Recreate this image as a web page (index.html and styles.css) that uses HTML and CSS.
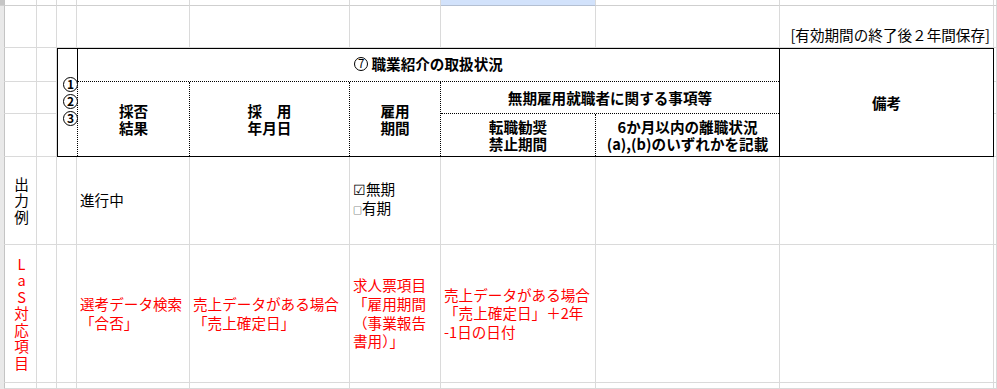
FILE: index.html
```html
<!DOCTYPE html>
<html lang="ja">
<head>
<meta charset="utf-8">
<title>職業紹介の取扱状況</title>
<link rel="stylesheet" href="styles.css">
</head>
<body>
<table class="sheet">
  <colgroup>
    <col class="w-rh"><col class="w-a"><col class="w-b"><col class="w-c"><col class="w-d"><col class="w-e"><col class="w-f"><col class="w-g"><col class="w-h"><col class="w-i"><col class="w-j">
  </colgroup>
  <tr class="r0">
    <td class="rh corner"></td><td></td><td></td><td></td><td></td><td></td><td></td><td class="sel"></td><td></td><td></td><td></td>
  </tr>
  <tr class="r1">
    <td class="rh"></td><td></td><td></td><td></td><td></td><td></td><td></td><td></td><td></td><td class="note">[有効期間の終了後２年間保存]</td><td></td>
  </tr>
  <tr class="r2">
    <td class="rh"></td><td></td><td></td>
    <td class="hdr" colspan="7" rowspan="3">
      <div class="hgrid">
        <div class="h-num"><span class="circ">1</span><span class="circ">2</span><span class="circ">3</span></div>
        <div class="hc h-title"><span class="circ circ-t">7</span>&nbsp;職業紹介の取扱状況</div>
        <div class="hc h-result">採否<br>結果</div>
        <div class="hc h-date">採　用<br>年月日</div>
        <div class="hc h-period">雇用<br>期間</div>
        <div class="hc h-indef">無期雇用就職者に関する事項等</div>
        <div class="hc h-ban">転職勧奨<br>禁止期間</div>
        <div class="hc h-leave">6か月以内の離職状況<br>(a),(b)のいずれかを記載</div>
        <div class="hc h-memo">備考</div>
      </div>
    </td>
    <td></td>
  </tr>
  <tr class="r3">
    <td class="rh"></td><td></td><td></td><td></td>
  </tr>
  <tr class="r4">
    <td class="rh"></td><td></td><td></td><td></td>
  </tr>
  <tr class="r5">
    <td class="rh"></td>
    <td class="vert">出<br>力<br>例</td>
    <td></td><td></td>
    <td class="txt">進行中</td>
    <td></td>
    <td class="txt"><span class="chk">☑</span>無期<br><span class="box">□</span>有期</td>
    <td></td><td></td><td></td><td></td>
  </tr>
  <tr class="r6">
    <td class="rh"></td>
    <td class="vert red">L<br>a<br>S<br>対<br>応<br>項<br>目</td>
    <td></td><td></td>
    <td class="txt red">選考データ検索<br>「合否」</td>
    <td class="txt red">売上データがある場合<br>「売上確定日」</td>
    <td class="txt red">求人票項目<br>「雇用期間<br>（事業報告<br>書用）」</td>
    <td class="txt red">売上データがある場合<br>「売上確定日」＋2年<br>-1日の日付</td>
    <td></td><td></td><td></td>
  </tr>
  <tr class="r7">
    <td class="rh"></td><td></td><td></td><td></td><td></td><td></td><td></td><td></td><td></td><td></td><td></td>
  </tr>
</table>
</body>
</html>
```

FILE: styles.css
```css
* { box-sizing: border-box; }
html, body {
  margin: 0;
  padding: 0;
  overflow: hidden;
  background: #fff;
}
body {
  font-family: "Noto Sans CJK JP", "Noto Sans", sans-serif;
  font-size: 14.6px;
  color: #000;
}
.sheet {
  border-collapse: separate;
  border-spacing: 0;
  table-layout: fixed;
  width: 997px;
}
.sheet td {
  padding: 0;
  border-right: 1px solid #dadada;
  border-bottom: 1px solid #dadada;
  vertical-align: middle;
  white-space: nowrap;
  line-height: 18.6px;
  overflow: visible;
}
.w-rh { width: 5px; }
.w-a { width: 32px; }
.w-b { width: 20px; }
.w-c { width: 20px; }
.w-d { width: 113px; }
.w-e { width: 160px; }
.w-f { width: 91px; }
.w-g { width: 155px; }
.w-h { width: 184px; }
.w-i { width: 214px; }
.w-j { width: 3px; }

.r0 { height: 6px; }
.r1 { height: 42px; }
.r2 { height: 34px; }
.r3 { height: 32px; }
.r4 { height: 43px; }
.r5 { height: 88px; }
.r6 { height: 138px; }
.r7 { height: 6px; }

.sheet td.rh {
  background: #e9e9e9;
  border-right-color: #c4c4c4;
  border-bottom-color: #e9e9e9;
}
.sheet td.corner {
  background: #c6c6c6;
  border-bottom-color: #bdbdbd;
}
.sheet .r0 td { border-bottom-color: #cfcfcf; }
.sheet td.sel {
  background: #d2e2fb;
  border-bottom-color: #b3bfd2;
}

.sheet td.note {
  vertical-align: bottom;
  text-align: right;
  padding: 0 3px 2px 0;
}

.sheet td.hdr {
  border: 1px solid #000;
  vertical-align: top;
}
.hgrid {
  display: grid;
  grid-template-columns: 19px 113px 160px 91px 155px 183px 214px;
  grid-template-rows: 33px 32px 42px;
  height: 107px;
  font-weight: 700;
  line-height: 17.5px;
}
.hc {
  display: flex;
  align-items: center;
  justify-content: center;
  text-align: center;
}
.circ {
  display: inline-flex;
  align-items: center;
  justify-content: center;
  width: 15px;
  height: 15px;
  border: 1px solid #000;
  border-radius: 50%;
  font-size: 12px;
  line-height: 1;
  font-weight: 700;
  background: #fff;
}
.circ-t {
  width: 14px;
  height: 14px;
  font-size: 11.5px;
  font-weight: 400;
}
.h-num {
  grid-column: 1;
  grid-row: 1 / 4;
  display: flex;
  flex-direction: column;
  justify-content: center;
  align-items: flex-end;
  gap: 2px;
  margin-right: -1px;
  padding-bottom: 3px;
  position: relative;
  z-index: 1;
}
.h-title {
  grid-column: 2 / 7;
  grid-row: 1;
  border-left: 1px solid #000;
  border-bottom: 1px dotted #000;
  padding-bottom: 3px;
}
.h-result {
  grid-column: 2;
  grid-row: 2 / 4;
  border-left: 1px dotted #000;
  border-right: 1px dotted #000;
}
.h-date {
  grid-column: 3;
  grid-row: 2 / 4;
  border-right: 1px dotted #000;
}
.h-period {
  grid-column: 4;
  grid-row: 2 / 4;
  border-right: 1px dotted #000;
}
.h-indef {
  grid-column: 5 / 7;
  grid-row: 2;
  border-bottom: 1px dotted #000;
}
.h-ban {
  grid-column: 5;
  grid-row: 3;
  border-right: 1px dotted #000;
}
.h-leave {
  grid-column: 6;
  grid-row: 3;
}
.h-memo {
  grid-column: 7;
  grid-row: 1 / 4;
  border-left: 1px solid #000;
}

.sheet td.vert {
  text-align: center;
  line-height: 16.5px;
  padding-left: 2px;
}
.sheet td.txt {
  padding-left: 3px;
  text-align: left;
}
.red { color: #ff0000; }
.chk { font-size: 14px; }
.box { font-size: 9px; }
```
